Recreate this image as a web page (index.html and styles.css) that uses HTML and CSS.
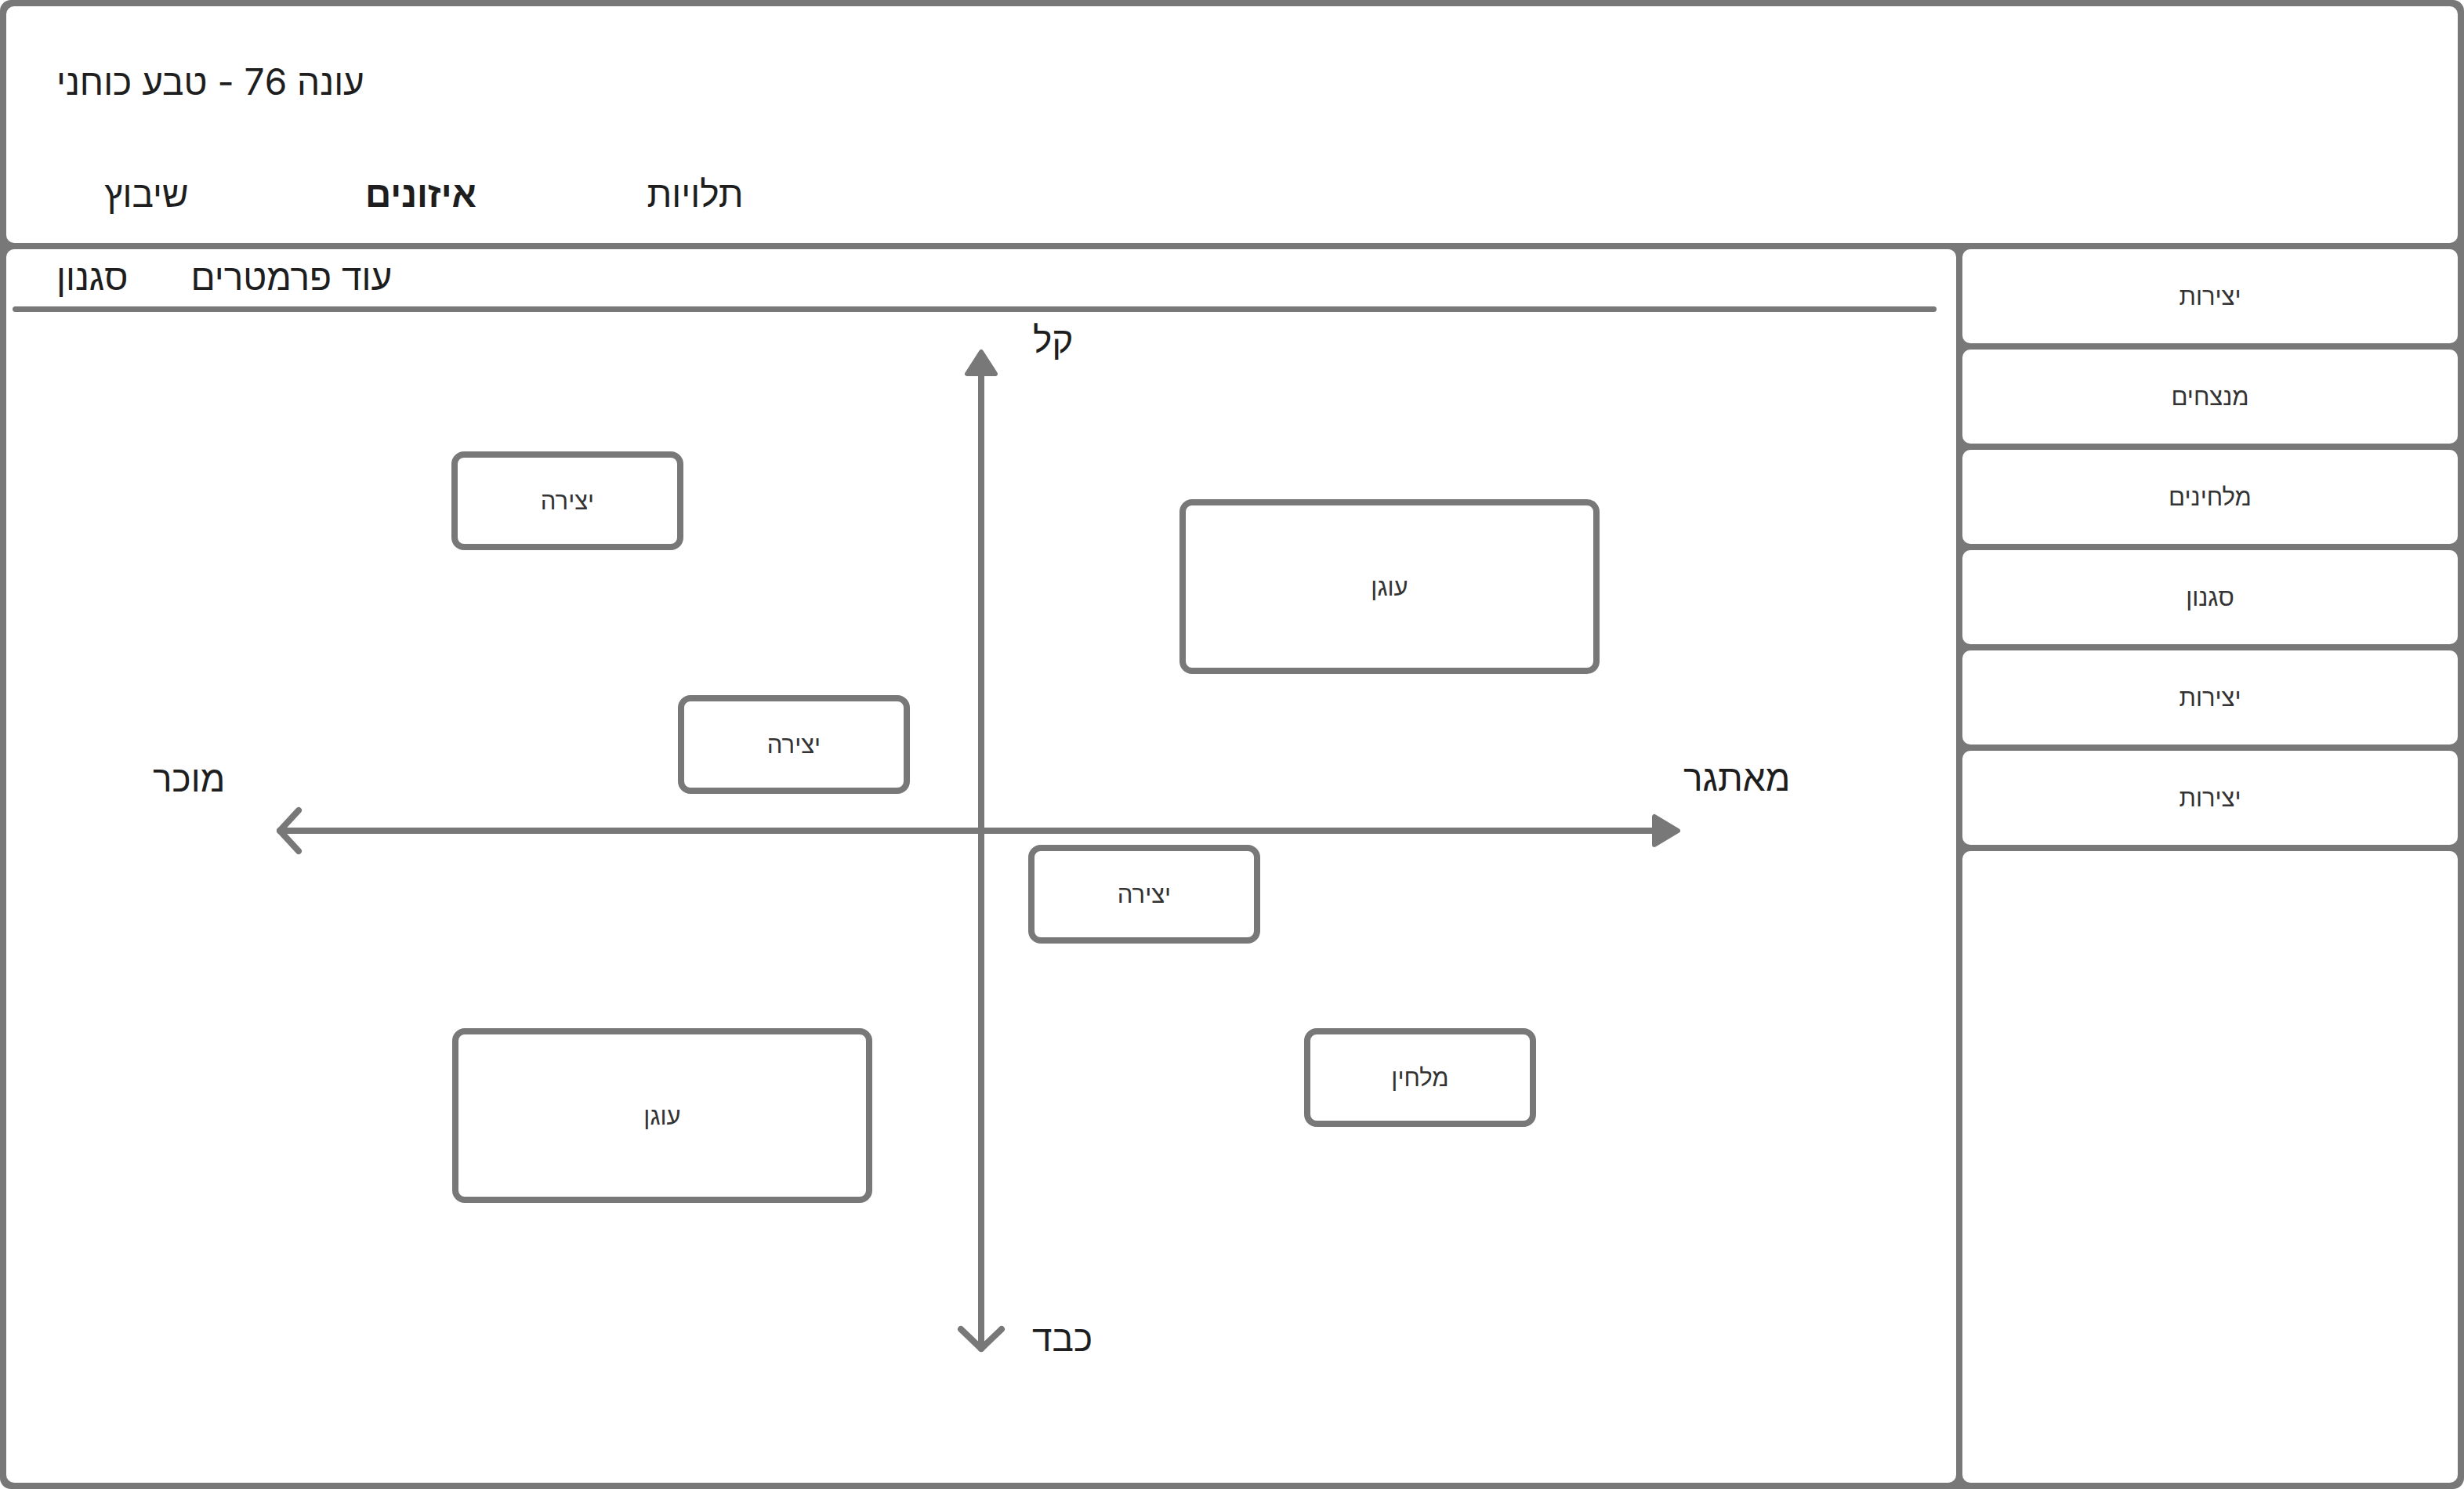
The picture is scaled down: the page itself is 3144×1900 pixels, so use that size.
FILE: index.html
```html
<!DOCTYPE html>
<html lang="he">
<head>
    <meta charset="utf-8">
    <title>עונה 76 - טבע כוחני</title>
    <link rel="stylesheet" href="styles.css">
</head>
<body>
    <div class="frame">
        <!-- כותרת עליונה -->
        <header class="header">
            <div class="season-title">עונה 76 - טבע כוחני</div>
            <nav class="main-nav">
                <span class="nav-item">שיבוץ</span>
                <span class="nav-item active">איזונים</span>
                <span class="nav-item">תלויות</span>
            </nav>
        </header>

        <!-- אזור עבודה -->
        <main class="workspace">
            <div class="sub-tabs">
                <span class="sub-tab">סגנון</span>
                <span class="sub-tab">עוד פרמטרים</span>
            </div>
            <div class="sub-rule"></div>

            <div class="chart">
                <svg class="axes" width="2488" height="1494" viewBox="0 0 2488 1494">
                    <g stroke="#787878" stroke-width="8" stroke-linecap="round" stroke-linejoin="round" fill="none">
                        <path d="M1244 79 V1323"/>
                        <path d="M349 662 H2104"/>
                        <polyline points="373,636 349,662 373,688"/>
                        <polyline points="1218,1298 1244,1323 1270,1298"/>
                    </g>
                    <g fill="#787878" stroke="#787878" stroke-width="6" stroke-linejoin="round">
                        <polygon points="1244,51 1226,79 1262,79"/>
                        <polygon points="2133,662 2103,644 2103,680"/>
                    </g>
                </svg>

                <span class="axis-label label-top">קל</span>
                <span class="axis-label label-bottom">כבד</span>
                <span class="axis-label label-right">מאתגר</span>
                <span class="axis-label label-left">מוכר</span>

                <div class="node small" style="left: 568px; top: 178px;">יצירה</div>
                <div class="node large" style="left: 1497px; top: 239px;">עוגן</div>
                <div class="node small" style="left: 857px; top: 489px;">יצירה</div>
                <div class="node small" style="left: 1304px; top: 680px;">יצירה</div>
                <div class="node large" style="left: 569px; top: 914px;">עוגן</div>
                <div class="node small" style="left: 1656px; top: 914px;">מלחין</div>
            </div>
        </main>

        <!-- סרגל צד -->
        <aside class="sidebar">
            <div class="side-item">יצירות</div>
            <div class="side-item">מנצחים</div>
            <div class="side-item">מלחינים</div>
            <div class="side-item">סגנון</div>
            <div class="side-item">יצירות</div>
            <div class="side-item">יצירות</div>
            <div class="side-fill"></div>
        </aside>
    </div>
</body>
</html>
```

FILE: styles.css
```css
body {
    margin: 0;
    padding: 0;
    background-color: #ffffff;
    font-family: Inter, 'Liberation Sans', 'DejaVu Sans', sans-serif;
    color: #1e1e1e;
}

/* ===== מסגרת כללית: קווי רשת אפורים בין תאים לבנים ===== */
.frame {
    width: 3144px;
    height: 1900px;
    box-sizing: border-box;
    padding: 8px;
    background-color: #787878;
    border-radius: 14px;
    display: grid;
    grid-template-columns: 2488px 632px;
    grid-template-rows: 302px 1574px;
    gap: 8px;
}

/* ===== כותרת ===== */
.header {
    grid-column: 1 / 3;
    background-color: #ffffff;
    border-radius: 10px;
    display: flex;
    flex-direction: column;
    padding: 73px 0 0 64px;
}

.season-title {
    font-size: 46px;
    line-height: 1;
}

.main-nav {
    display: flex;
    margin-top: 97px;
    margin-left: -60px;
}

.nav-item {
    width: 350px;
    text-align: center;
    font-size: 46px;
    line-height: 1;
}

.nav-item.active {
    font-weight: bold;
}

/* ===== אזור עבודה ===== */
.workspace {
    background-color: #ffffff;
    border-radius: 10px;
    display: flex;
    flex-direction: column;
    overflow: hidden;
}

.sub-tabs {
    display: flex;
    gap: 80px;
    padding: 12px 0 0 64px;
    height: 54px;
}

.sub-tab {
    font-size: 46px;
    line-height: 1;
}

.sub-rule {
    height: 7px;
    margin: 7px 25px 0 8px;
    background-color: #787878;
    border-radius: 4px;
}

.chart {
    position: relative;
    flex: 1;
}

.axes {
    position: absolute;
    left: 0;
    top: 0;
}

.axis-label {
    position: absolute;
    font-size: 46px;
    line-height: 1;
}

.label-top { left: 1310px; top: 12px; }
.label-bottom { left: 1309px; top: 1286px; }
.label-right { left: 2140px; top: 571px; }
.label-left { left: 187px; top: 572px; }

/* צמתים על הציר */
.node {
    position: absolute;
    box-sizing: border-box;
    border: 8px solid #787878;
    border-radius: 16px;
    background-color: #ffffff;
    display: flex;
    align-items: center;
    justify-content: center;
    font-size: 31px;
    color: #333333;
}

.node.small {
    width: 296px;
    height: 126px;
}

.node.large {
    width: 536px;
    height: 223px;
}

/* ===== סרגל צד ===== */
.sidebar {
    display: flex;
    flex-direction: column;
    gap: 8px;
}

.side-item {
    height: 120px;
    background-color: #ffffff;
    border-radius: 10px;
    display: flex;
    align-items: center;
    justify-content: center;
    font-size: 31px;
    color: #333333;
}

.side-fill {
    flex: 1;
    background-color: #ffffff;
    border-radius: 10px;
}
```
